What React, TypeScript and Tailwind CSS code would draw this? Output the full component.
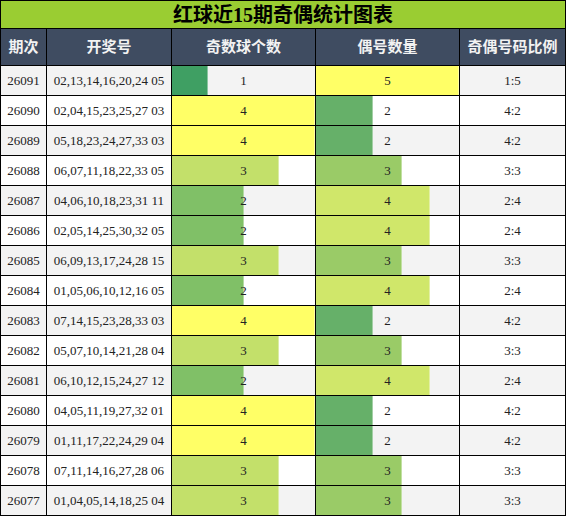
const rows: [string, string, number, number][] = [
  ["26091", "02,13,14,16,20,24 05", 1, 5],
  ["26090", "02,04,15,23,25,27 03", 4, 2],
  ["26089", "05,18,23,24,27,33 03", 4, 2],
  ["26088", "06,07,11,18,22,33 05", 3, 3],
  ["26087", "04,06,10,18,23,31 11", 2, 4],
  ["26086", "02,05,14,25,30,32 05", 2, 4],
  ["26085", "06,09,13,17,24,28 15", 3, 3],
  ["26084", "01,05,06,10,12,16 05", 2, 4],
  ["26083", "07,14,15,23,28,33 03", 4, 2],
  ["26082", "05,07,10,14,21,28 04", 3, 3],
  ["26081", "06,10,12,15,24,27 12", 2, 4],
  ["26080", "04,05,11,19,27,32 01", 4, 2],
  ["26079", "01,11,17,22,24,29 04", 4, 2],
  ["26078", "07,11,14,16,27,28 06", 3, 3],
  ["26077", "01,04,05,14,18,25 04", 3, 3],
];

const oddColors: Record<number, string> = {
  1: "#3f9f63",
  2: "#80c067",
  3: "#c3e06a",
  4: "#ffff66",
};

const evenColors: Record<number, string> = {
  2: "#66b069",
  3: "#9acb67",
  4: "#d0e76a",
  5: "#ffff66",
};

function BarCell({ value, max, color, bg }: { value: number; max: number; color: string; bg: string }) {
  return (
    <div className={`relative flex items-center justify-center ${bg}`}>
      <div
        className="absolute left-0 top-0 bottom-0 border-r border-white/40"
        style={{ width: `${(value / max) * 100}%`, backgroundColor: color }}
      />
      <span className="relative">{value}</span>
    </div>
  );
}

export default function App() {
  const headers = ["期次", "开奖号", "奇数球个数", "偶号数量", "奇偶号码比例"];

  return (
    <div
      className="w-[566px] h-[516px] overflow-hidden bg-black p-px"
      style={{ fontFamily: '"Liberation Serif", "Noto Sans CJK SC", serif' }}
    >
      <div className="grid grid-cols-[45px_124px_143px_143px_105px] grid-rows-[27px_36px_repeat(15,29px)] gap-px">
        <div className="col-span-5 bg-[#9acd32] flex items-center justify-center text-[20px] font-bold text-black">
          红球近15期奇偶统计图表
        </div>

        {headers.map((h) => (
          <div
            key={h}
            className="bg-[#3f4c61] flex items-center justify-center text-[15px] font-bold text-[#f2f2f2]"
          >
            {h}
          </div>
        ))}

        {rows.map(([issue, nums, odd, even], i) => {
          const bg = i % 2 === 0 ? "bg-[#f3f3f3]" : "bg-white";
          return [
            <div key={issue + "a"} className={`${bg} flex items-center justify-center text-[13px] text-[#222]`}>
              {issue}
            </div>,
            <div key={issue + "b"} className={`${bg} flex items-center justify-center text-[13px] text-[#222]`}>
              {nums}
            </div>,
            <div key={issue + "c"} className="text-[13px] text-[#222] grid">
              <BarCell value={odd} max={4} color={oddColors[odd]} bg={bg} />
            </div>,
            <div key={issue + "d"} className="text-[13px] text-[#222] grid">
              <BarCell value={even} max={5} color={evenColors[even]} bg={bg} />
            </div>,
            <div key={issue + "e"} className={`${bg} flex items-center justify-center text-[13px] text-[#222]`}>
              {odd}:{even}
            </div>,
          ];
        })}
      </div>
    </div>
  );
}
